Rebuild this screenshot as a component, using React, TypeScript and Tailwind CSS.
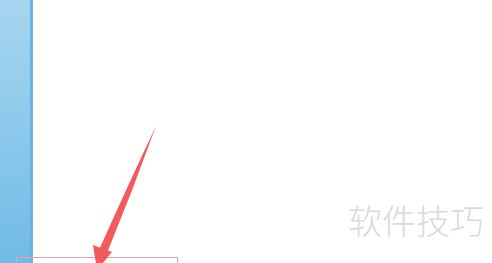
export default function App() {
    return (
        <div className="relative flex h-[263px] w-[492px] overflow-hidden bg-white">
            {/* Barre latérale */}
            <div className="h-full w-[33px] shrink-0 border-r-[3px] border-[#6ab3e0] bg-gradient-to-b from-[#a6d6f0] to-[#70bbe6]"/>

            {/* Zone principale */}
            <div className="flex flex-1 flex-col">
                <div className="flex-1"/>
                <div className="ml-[-17px] h-[6px] w-[162px] border-x border-t border-[#e3a3a6]"/>
            </div>

            {/* Flèche */}
            <svg className="absolute left-0 top-0" width="492" height="263" viewBox="0 0 492 263">
                <path d="M156 126 Q128 185 99 250 L107 253 Q133 190 156 126 Z" fill="#f25a5c"/>
                <path d="M93 245 L112 252 L97 270 Z" fill="#f25a5c"/>
            </svg>

            {/* Filigrane */}
            <div
                className="absolute left-[348px] top-[203px] text-[34px] font-light leading-none text-[#dadada]"
                style={{fontFamily: '"Noto Sans CJK SC", sans-serif'}}
            >
                软件技巧
            </div>
        </div>
    );
}
